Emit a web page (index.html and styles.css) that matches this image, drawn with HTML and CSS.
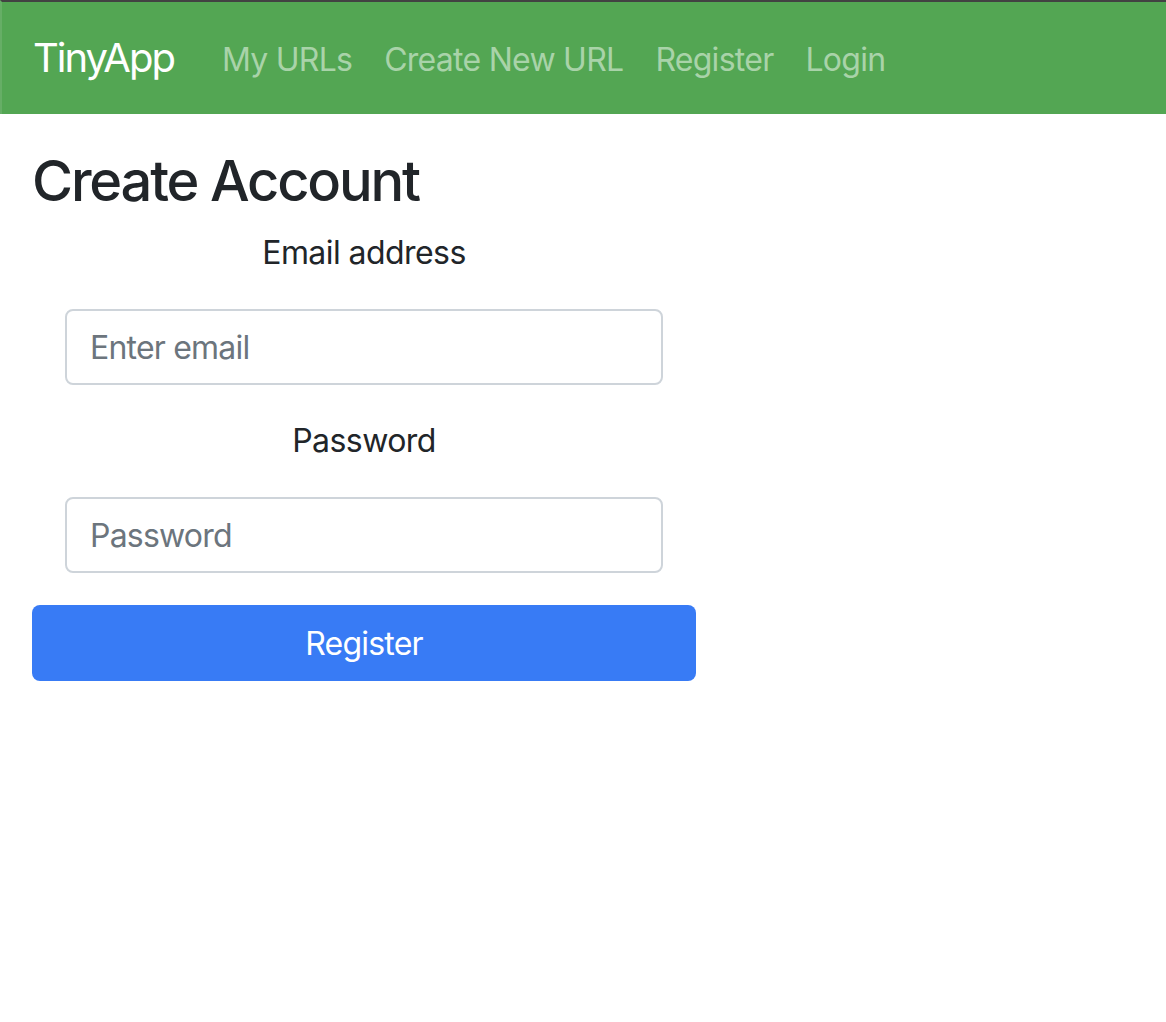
FILE: index.html
```html
<!DOCTYPE html>
<html lang="en">
<head>
<meta charset="utf-8">
<title>TinyApp - Register</title>
<link rel="stylesheet" href="styles.css">
</head>
<body>
<nav class="navbar">
  <a class="brand" href="#">TinyApp</a>
  <ul class="nav">
    <li><a class="nav-link" href="#">My URLs</a></li>
    <li><a class="nav-link" href="#">Create New URL</a></li>
    <li><a class="nav-link" href="#">Register</a></li>
    <li><a class="nav-link" href="#">Login</a></li>
  </ul>
</nav>
<main class="container">
  <h3 class="title">Create Account</h3>
  <form class="form">
    <div class="form-group">
      <label class="label" for="email">Email address</label>
      <input class="input" id="email" type="email" placeholder="Enter email">
    </div>
    <div class="form-group">
      <label class="label" for="password">Password</label>
      <input class="input" id="password" type="password" placeholder="Password">
    </div>
    <button class="btn" type="submit">Register</button>
  </form>
</main>
</body>
</html>
```

FILE: styles.css
```css
* { box-sizing: border-box; }

body {
  margin: 0;
  font-family: Inter, "Liberation Sans", Arial, sans-serif;
  letter-spacing: -0.035em;
  color: #212529;
  background: #fff;
}

.navbar {
  display: flex;
  align-items: center;
  height: 114px;
  padding: 16px 32px 16px 31px;
  background: #53a653;
  border-top: 2px solid #424242;
  border-left: 2px solid #66ae66;
}

.brand {
  display: block;
  font-size: 40px;
  line-height: 60px;
  letter-spacing: -0.05em;
  padding: 10px 0;
  margin-right: 32px;
  color: #fff;
  text-decoration: none;
}

.nav {
  display: flex;
  list-style: none;
  margin: 0;
  padding: 0;
}

.nav-link {
  display: block;
  padding: 18px 16px 14px;
  font-size: 32px;
  line-height: 48px;
  letter-spacing: -0.023em;
  color: #a9d3a9;
  text-decoration: none;
}

.container {
  padding: 34px 30px 0;
}

.title {
  margin: 0 0 14px 2px;
  font-size: 56px;
  line-height: 67px;
  font-weight: 500;
  letter-spacing: -0.039em;
}

.form {
  width: 664px;
  margin-left: 2px;
  text-align: center;
}

.form-group {
  margin-bottom: 32px;
}

.label {
  display: block;
  font-size: 32px;
  line-height: 48px;
  margin-bottom: 32px;
}

.input {
  display: block;
  width: 598px;
  height: 76px;
  margin: 0 auto;
  padding: 0 24px 0 23px;
  font-family: inherit;
  letter-spacing: -0.025em;
  font-size: 32px;
  color: #495057;
  background: #fff;
  border: 2px solid #ced4da;
  border-radius: 8px;
  text-align: left;
}

.input::placeholder {
  color: #6c757d;
  opacity: 1;
}

.btn {
  display: block;
  width: 100%;
  height: 76px;
  font-family: inherit;
  letter-spacing: -0.025em;
  font-size: 32px;
  color: #fff;
  background: #387bf5;
  border: 0;
  border-radius: 8px;
  cursor: pointer;
}
```
